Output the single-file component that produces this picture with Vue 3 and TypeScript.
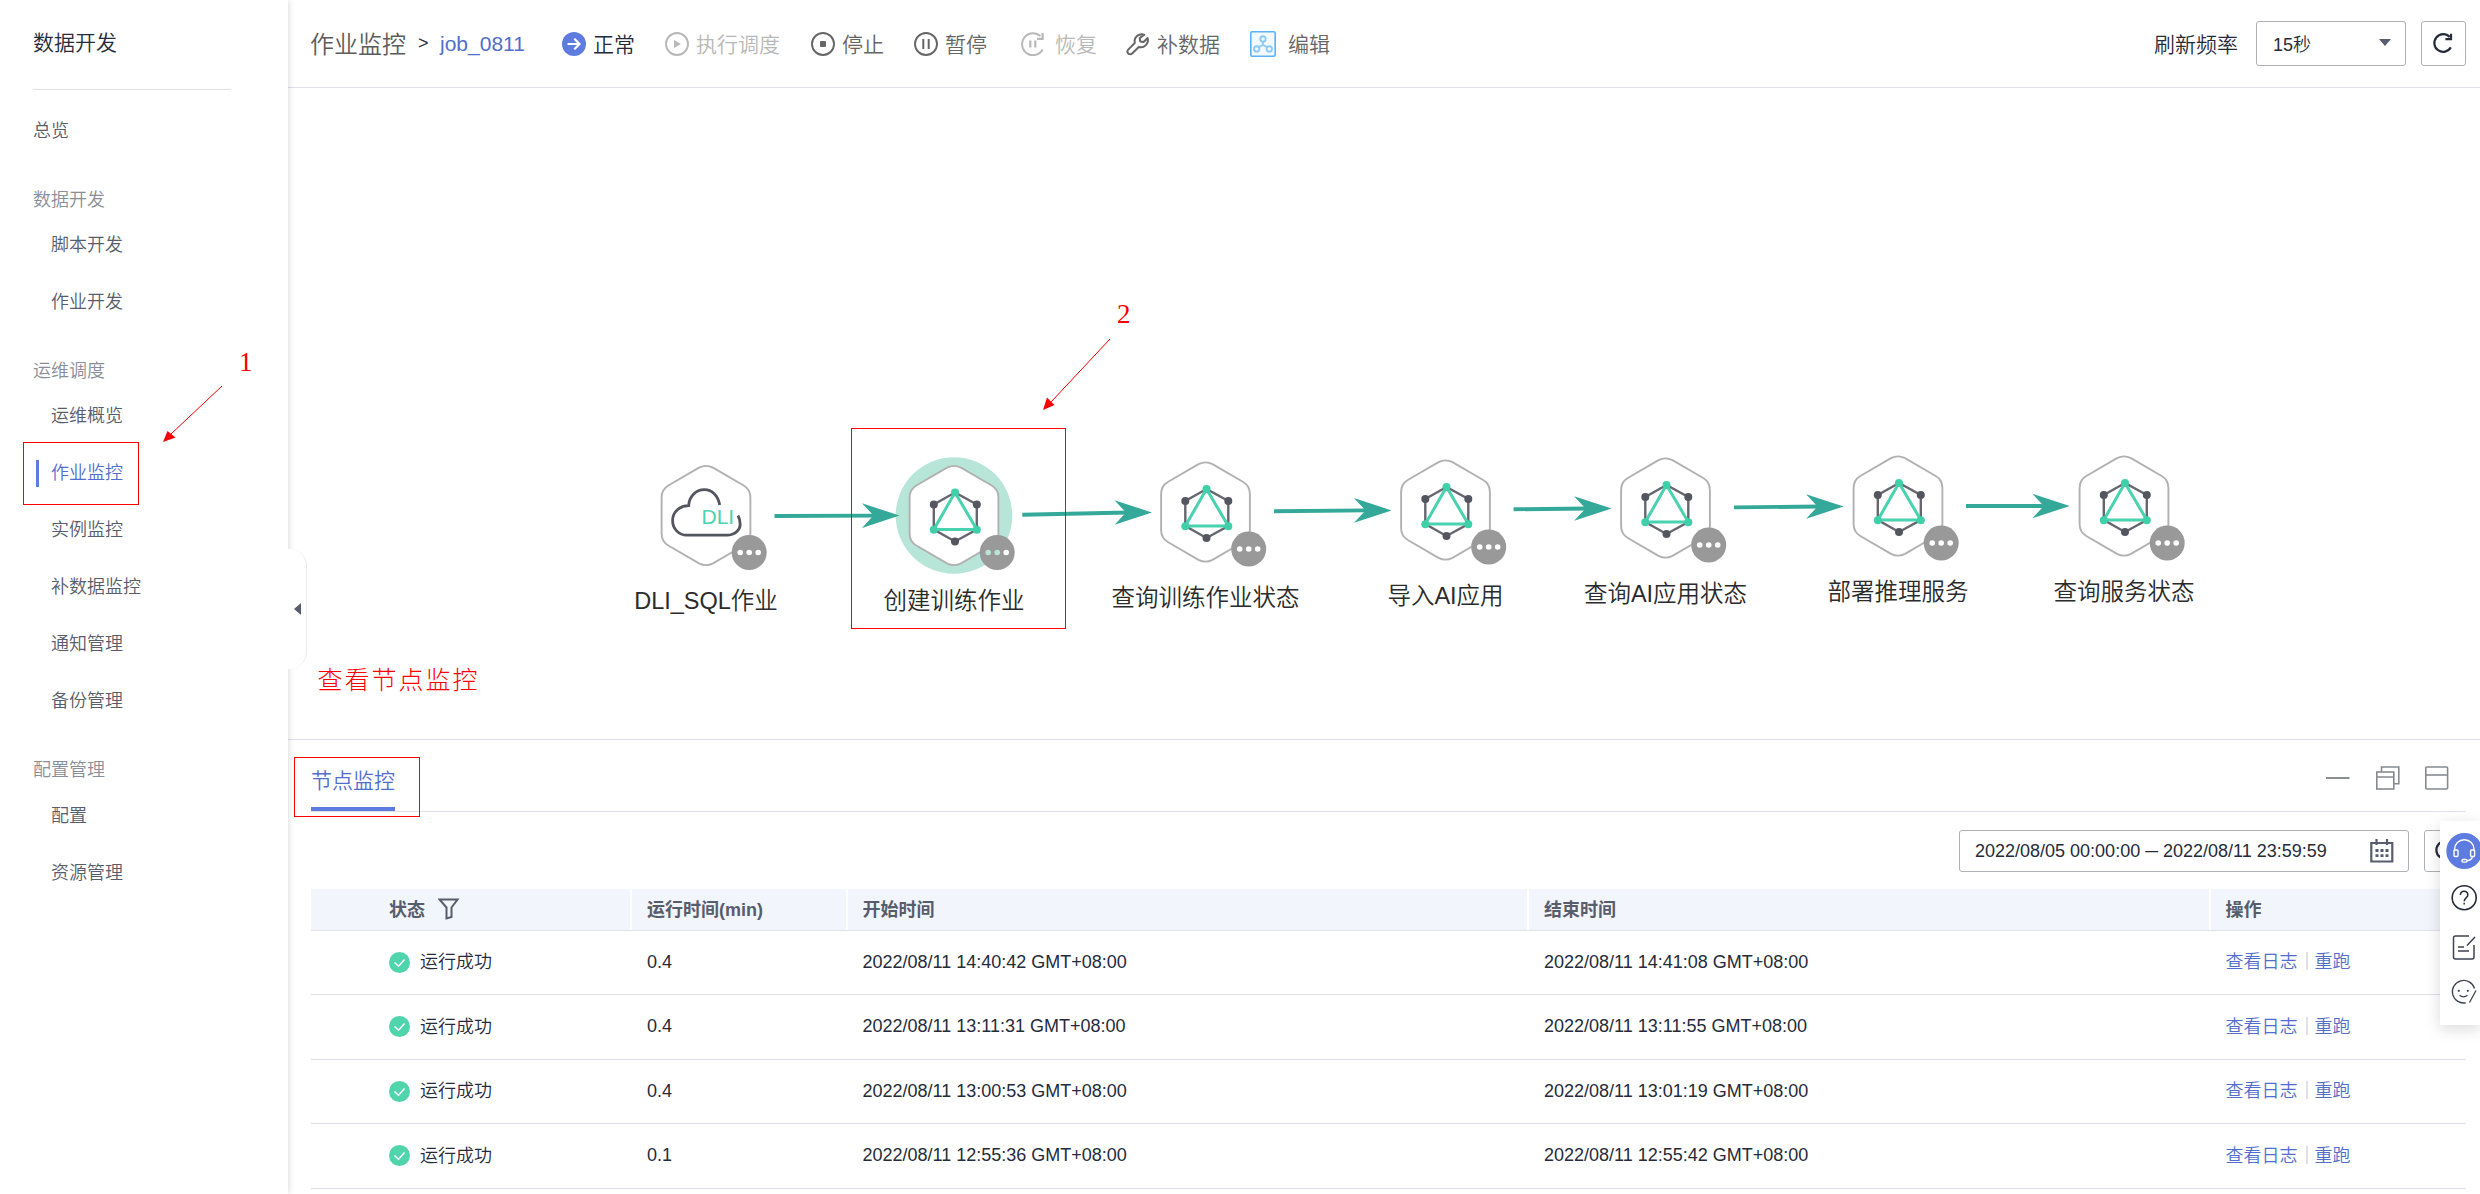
<script setup lang="ts">
interface NavItem { label: string; active?: boolean }
interface NavGroup { title: string; items: NavItem[] }
interface FlowNode { x: number; y: number; label: string; kind: 'dli' | 'train'; selected?: boolean }
interface Link { x1: number; y1: number; x2: number; y2: number }
interface Run { minutes: string; start: string; end: string }

const groups: NavGroup[] = [
  { title: '数据开发', items: [{ label: '脚本开发' }, { label: '作业开发' }] },
  {
    title: '运维调度',
    items: [
      { label: '运维概览' },
      { label: '作业监控', active: true },
      { label: '实例监控' },
      { label: '补数据监控' },
      { label: '通知管理' },
      { label: '备份管理' },
    ],
  },
  { title: '配置管理', items: [{ label: '配置' }, { label: '资源管理' }] },
]

const nodes: FlowNode[] = [
  { x: 706, y: 515.5, label: 'DLI_SQL作业', kind: 'dli' },
  { x: 954, y: 515.5, label: '创建训练作业', kind: 'train', selected: true },
  { x: 1205.5, y: 512, label: '查询训练作业状态', kind: 'train' },
  { x: 1445.5, y: 510, label: '导入AI应用', kind: 'train' },
  { x: 1665.5, y: 508, label: '查询AI应用状态', kind: 'train' },
  { x: 1898, y: 506, label: '部署推理服务', kind: 'train' },
  { x: 2124, y: 506, label: '查询服务状态', kind: 'train' },
]

const links: Link[] = [
  { x1: 774.5, y1: 516, x2: 899.5, y2: 515.6 },
  { x1: 1022.3, y1: 514.8, x2: 1152, y2: 512.5 },
  { x1: 1274, y1: 511.3, x2: 1391.5, y2: 510.4 },
  { x1: 1513.6, y1: 509.3, x2: 1611.6, y2: 508.5 },
  { x1: 1734, y1: 507.4, x2: 1843.6, y2: 506.5 },
  { x1: 1966, y1: 506, x2: 2069.8, y2: 506 },
]

const runs: Run[] = [
  { minutes: '0.4', start: '2022/08/11 14:40:42 GMT+08:00', end: '2022/08/11 14:41:08 GMT+08:00' },
  { minutes: '0.4', start: '2022/08/11 13:11:31 GMT+08:00', end: '2022/08/11 13:11:55 GMT+08:00' },
  { minutes: '0.4', start: '2022/08/11 13:00:53 GMT+08:00', end: '2022/08/11 13:01:19 GMT+08:00' },
  { minutes: '0.1', start: '2022/08/11 12:55:36 GMT+08:00', end: '2022/08/11 12:55:42 GMT+08:00' },
]

const hexPath =
  'M-7,-47.8 Q0,-51.4 7,-47.8 L37.7,-30 Q44.4,-26 44.4,-18 L44.4,18 Q44.4,26 37.7,30 L7,47.8 Q0,51.4 -7,47.8 L-37.7,30 Q-44.4,26 -44.4,18 L-44.4,-18 Q-44.4,-26 -37.7,-30 Z'
</script>

<template>
  <div class="page">
    <aside class="sidebar">
      <div class="side-title">数据开发</div>
      <nav>
        <div class="nav-top">总览</div>
        <section v-for="g in groups" :key="g.title">
          <div class="nav-group">{{ g.title }}</div>
          <div v-for="i in g.items" :key="i.label" class="nav-item" :class="{ active: i.active }">{{ i.label }}</div>
        </section>
      </nav>
      <div class="collapse"><span class="collapse-arrow"></span></div>
    </aside>

    <main class="main">
      <header class="toolbar">
        <span class="crumb">作业监控</span>
        <span class="sep">&gt;</span>
        <span class="job">job_0811</span>
        <span class="tool status">
          <svg width="24" height="24" viewBox="0 0 24 24"><circle cx="12" cy="12" r="12" fill="#5e7ce0" /><path d="M5.5 12H17M12.3 6.8 17.5 12l-5.2 5.2" fill="none" stroke="#fff" stroke-width="2.2" /></svg>
          <span>正常</span>
        </span>
        <span class="tool off">
          <svg width="24" height="24" viewBox="0 0 24 24"><circle cx="12" cy="12" r="11" fill="none" stroke="currentColor" stroke-width="1.9" /><path d="M9 8v8l7-4z" fill="currentColor" /></svg>
          <span>执行调度</span>
        </span>
        <span class="tool">
          <svg width="24" height="24" viewBox="0 0 24 24"><circle cx="12" cy="12" r="11" fill="none" stroke="currentColor" stroke-width="1.9" /><rect x="9" y="9" width="6" height="6" rx="1" fill="currentColor" /></svg>
          <span>停止</span>
        </span>
        <span class="tool pause">
          <svg width="24" height="24" viewBox="0 0 24 24"><circle cx="12" cy="12" r="11" fill="none" stroke="currentColor" stroke-width="1.9" /><path d="M9.3 7v10M14.7 7v10" stroke="currentColor" stroke-width="2" /></svg>
          <span>暂停</span>
        </span>
        <span class="tool off resume">
          <svg width="24" height="24" viewBox="0 0 24 24"><path d="M21.7 17.5A11 11 0 1 1 19.5 4" fill="none" stroke="currentColor" stroke-width="2" /><path d="M21.600 1v5.800h-5.500" fill="none" stroke="currentColor" stroke-width="2.200" /><path d="M9.300 8.500v7M14.300 8.500v7" stroke="currentColor" stroke-width="2.200" /></svg>
          <span>恢复</span>
        </span>
        <span class="tool">
          <svg width="24" height="24" viewBox="0 0 24 24"><path d="M18.200 2.600A7.200 7.200 0 0 0 8.800 11L2.200 17.600a2.700 2.700 0 0 0 0 3.900 2.700 2.700 0 0 0 3.900 0L12.800 15A7.200 7.200 0 0 0 21.600 6l-4 4-3.400-.6-.5-3.300z" fill="none" stroke="currentColor" stroke-width="2" stroke-linejoin="round" /></svg>
          <span>补数据</span>
        </span>
        <span class="tool edit">
          <svg width="26" height="26" viewBox="0 0 26 26" fill="none"><rect x=".8" y=".8" width="24.400" height="24.400" rx="1.500" fill="#f3faff" stroke="#5ab2f8" stroke-width="1.600" /><g stroke="#8ecbfb" stroke-width="1.900"><circle cx="13" cy="8" r="2.700" /><circle cx="6.700" cy="18" r="2.700" /><circle cx="19.300" cy="18" r="2.700" /><path d="M13 11v3.200M8.600 16.200 13 14l4.400 2.200" /></g></svg>
          <span>编辑</span>
        </span>
        <span class="rate-label">刷新频率</span>
        <div class="select"><span>15秒</span><span class="caret"></span></div>
        <button class="btn-refresh" aria-label="refresh">
          <svg width="22" height="22" viewBox="0 0 22 22"><path d="M18.800 15.400A8.800 8.800 0 1 1 17.600 5" fill="none" stroke="#252b3a" stroke-width="2.200" /><path d="M19 1.800v5.400h-5.600" fill="none" stroke="#252b3a" stroke-width="2.200" /></svg>
        </button>
      </header>

      <div class="canvas">
        <svg width="2192" height="651" viewBox="288 88 2192 651">
          <g v-for="n in nodes" :key="n.label" :transform="`translate(${n.x},${n.y})`">
            <circle v-if="n.selected" r="58.3" fill="#b7e6d8" />
            <path :d="hexPath" fill="#fff" stroke="#b1b1b1" stroke-width="1.9" />
            <g v-if="n.kind === 'dli'">
              <path d="M13.7,-10.5 C12,-20 6,-25.8 -1.7,-25.8 C-10,-25.8 -17,-19 -17.3,-9.8 C-26,-9.8 -33.4,-4 -33.4,5 C-33.4,13 -27.5,19.7 -19,19.7 L21,19.7 C29,19.7 34.2,14 34.2,9 C34.2,5 33.6,3 32,0" fill="none" stroke="#53555f" stroke-width="2.8" />
              <text x="-4.5" y="8.4" class="dli">DLI</text>
            </g>
            <g v-else transform="translate(1,0)">
              <path d="M0,-23 L21.8,-11 L21.8,14 L0,26 L-21.2,14 L-21.2,-11 Z" fill="none" stroke="#65666f" stroke-width="2.4" />
              <circle cx="21.8" cy="-11" r="4" fill="#53555f" />
              <circle cx="-21.2" cy="-11" r="4" fill="#53555f" />
              <circle cx="0" cy="26" r="4" fill="#53555f" />
              <path d="M0,-23 L21.8,14 L-21.2,14 Z" fill="#fff" stroke="#49d2af" stroke-width="3" />
              <circle cx="0" cy="-23" r="4" fill="#3fcfa9" />
              <circle cx="21.8" cy="14.3" r="4" fill="#3fcfa9" />
              <circle cx="-21.2" cy="14.3" r="4" fill="#3fcfa9" />
            </g>
            <g transform="translate(43.2,37)">
              <circle r="17.5" fill="#999" />
              <circle cx="-9" r="2.8" :fill="n.selected ? '#b7e6d8' : '#fff'" />
              <circle cx="0" r="2.8" :fill="n.selected ? '#b7e6d8' : '#fff'" />
              <circle cx="9" r="2.8" fill="#fff" />
            </g>
            <text x="0" y="93.5" text-anchor="middle" class="node-label">{{ n.label }}</text>
          </g>
          <g v-for="l in links" :key="l.x1" fill="#34a899">
            <line :x1="l.x1" :y1="l.y1" :x2="l.x2 - 24" :y2="l.y2" stroke="#34a899" stroke-width="3.9" />
            <path :transform="`translate(${l.x2},${l.y2})`" d="M0,0 L-37.5,12.3 L-26,0 L-37.5,-12.3 Z" />
          </g>
        </svg>
      </div>

      <section class="panel">
        <div class="tabs">
          <span class="tab">节点监控</span>
          <div class="win-icons">
            <svg width="24" height="24" viewBox="0 0 24 24"><path d="M0 12h23.500" stroke="#868a8f" stroke-width="1.900" /></svg>
            <svg width="24" height="24" viewBox="0 0 24 24" fill="none" stroke="#868a8f" stroke-width="1.600"><rect x=".8" y="6" width="17" height="17" /><path d="M.8 11h17M5.500 6V1h17.300v16.800h-5" /></svg>
            <svg width="24" height="24" viewBox="0 0 24 24" fill="none" stroke="#868a8f" stroke-width="1.600"><rect x=".8" y="1" width="21.800" height="22" rx="1" /><path d="M.8 9h21.800" /></svg>
          </div>
        </div>
        <div class="filters">
          <div class="daterange">
            <span>2022/08/05 00:00:00 ─ 2022/08/11 23:59:59</span>
            <svg width="24" height="24" viewBox="0 0 24 24" fill="none" stroke="#575d6c"><path d="M1.300 4h21v18.500h-21z" stroke-width="2.200" /><path d="M6.500 0v6M17 0v6" stroke-width="2.200" /><path d="M5.500 11.500h13M5.500 16.700h13" stroke-width="2.800" stroke-dasharray="3 2" /></svg>
          </div>
          <button class="btn-refresh small" aria-label="refresh">
            <svg width="22" height="22" viewBox="0 0 22 22"><path d="M18.800 15.400A8.800 8.800 0 1 1 17.600 5" fill="none" stroke="#252b3a" stroke-width="2.200" /></svg>
          </button>
        </div>
        <div class="table">
          <div class="row head">
            <div class="cell c-status"><span>状态</span>
              <svg width="22" height="22" viewBox="0 0 22 22"><path d="M1.500 1.500h18l-6 8v9.500l-5 1.500v-11z" fill="none" stroke="#575d6c" stroke-width="2" /></svg>
            </div>
            <div class="cell"><span>运行时间(min)</span></div>
            <div class="cell"><span>开始时间</span></div>
            <div class="cell"><span>结束时间</span></div>
            <div class="cell last"><span>操作</span></div>
          </div>
          <div v-for="r in runs" :key="r.start" class="row">
            <div class="cell c-status">
              <svg class="ok" width="21" height="21" viewBox="0 0 21 21"><circle cx="10.500" cy="10.500" r="10.500" fill="#50d4ab" /><path d="M5.500 10.500l4 3.700 6-6.600" fill="none" stroke="#fff" stroke-width="1.500" /></svg>
              <span class="cn">运行成功</span>
            </div>
            <div class="cell">{{ r.minutes }}</div>
            <div class="cell">{{ r.start }}</div>
            <div class="cell">{{ r.end }}</div>
            <div class="cell ops"><a class="cn">查看日志</a><i></i><a class="cn">重跑</a></div>
          </div>
        </div>
      </section>
    </main>

    <div class="float-bar">
      <svg width="40" height="204" viewBox="2440 821 40 204" fill="none" stroke="#3c4354" stroke-width="1.5">
        <circle cx="2464.3" cy="851" r="18" fill="#5e7ce0" stroke="none" />
        <g stroke="#fff" stroke-width="1.4">
          <path d="M2454.5 850.5v-1a9.8 9.8 0 0 1 19.6 0v1" />
          <rect x="2454" y="850" width="4" height="6.5" rx="1" />
          <rect x="2470.6" y="850" width="4" height="6.5" rx="1" />
          <path d="M2472.5 857c-1 2.500-3 3.500-5.500 3.800" />
          <rect x="2462" y="859.500" width="5" height="2.600" rx="1" />
        </g>
        <circle cx="2464.200" cy="897.700" r="12" stroke="#252b3a" stroke-width="1.600" />
        <path d="M2460.400 895c0-5 7.400-5 7.400 0 0 2.900-3.600 2.900-3.600 6.200M2464.200 902.800v1.800" stroke="#252b3a" />
        <path d="M2469 936h-13.500q-2 0-2 2v19q0 2 2 2h16.500q2 0 2-2v-12M2475 937l-8 8.500M2458 947h6M2458 951h11" />
        <path d="M2465.800 1002.800A11.300 11.300 0 1 1 2474.500 988.500M2476 990.500l-6.500 12M2459.500 995.300q4 3.200 8 0" stroke-width="1.300" />
        <circle cx="2458.800" cy="990.800" r="1.100" fill="#3c4354" stroke="none" />
        <circle cx="2467.800" cy="990.800" r="1.100" fill="#3c4354" stroke="none" />
      </svg>
    </div>

    <svg class="notes" width="2480" height="1194" viewBox="0 0 2480 1194" fill="none" stroke="#f00">
      <g shape-rendering="crispEdges">
        <rect x="23.500" y="442.500" width="115" height="62" />
        <rect x="851.500" y="428.500" width="214" height="200" />
        <rect x="294.500" y="757.500" width="125" height="59" />
      </g>
      <path d="M222 386 171 434M1110 339 1051 402" />
      <path d="M163 442l4.500-11 8 6.500zM1043 410l4-12.500 7.500 7.500z" fill="#f00" stroke="none" />
      <text x="239" y="371" class="num">1</text>
      <text x="1117" y="323" class="num">2</text>
      <text x="317.500" y="688.500" class="note">查看节点监控</text>
    </svg>
  </div>
</template>

<style>
body {
  margin: 0;
  overflow: hidden;
  background: #fff;
}
</style>

<style scoped>
.page {
  position: relative;
  display: flex;
  width: 2480px;
  height: 1194px;
  overflow: hidden;
  background: #fff;
  color: #252b3a;
  font-family: "Liberation Sans", "Noto Sans CJK SC", sans-serif;
  font-size: 18px;
  font-weight: 350;
}
svg {
  display: block;
  flex: none;
}
.sidebar {
  position: relative;
  z-index: 2;
  flex: none;
  box-sizing: border-box;
  width: 288px;
  height: 1194px;
  padding-left: 33px;
  background: #fff;
  box-shadow: 1px 0 6px rgba(0, 0, 0, 0.14);
}
.side-title {
  width: 198px;
  height: 89px;
  line-height: 86px;
  font-size: 21px;
  border-bottom: 1px solid #dfe1e6;
}
.nav-top {
  height: 57px;
  margin-top: 13px;
  line-height: 57px;
  color: #575d6c;
}
.nav-group {
  height: 25.200px;
  padding-top: 28px;
  padding-bottom: 4px;
  line-height: 25px;
  color: #8a8e99;
}
.nav-item {
  position: relative;
  height: 57px;
  padding-left: 18px;
  line-height: 57px;
  color: #575d6c;
}
.nav-item.active {
  color: #526ecc;
}
.nav-item.active::before {
  content: "";
  position: absolute;
  left: 3px;
  top: 15px;
  width: 3px;
  height: 27px;
  background: #5e7ce0;
}
.collapse {
  position: absolute;
  left: 288px;
  top: 549px;
  display: flex;
  align-items: center;
  box-sizing: border-box;
  width: 19px;
  height: 120px;
  padding-left: 6px;
  background: #fff;
  border-right: 1px solid #e9ebf3;
  border-radius: 0 17px 17px 0;
}
.collapse-arrow {
  border: 6px solid transparent;
  border-left-width: 0;
  border-right: 7px solid #575d6c;
}
.main {
  flex: 1;
  display: flex;
  flex-direction: column;
  min-width: 0;
}
.toolbar {
  display: flex;
  align-items: center;
  box-sizing: border-box;
  height: 88px;
  padding: 0 14px 0 22px;
  border-bottom: 1px solid #dfe1e6;
  font-size: 21px;
  white-space: nowrap;
}
.crumb {
  padding-bottom: 2px;
  font-size: 24px;
  color: #5c5c5c;
}
.sep {
  width: 22px;
  margin-left: 12px;
  font-size: 18px;
}
.job {
  width: 84px;
  margin-right: 38px;
  color: #526ecc;
}
.tool {
  display: flex;
  align-items: center;
  gap: 7px;
  margin-right: 30px;
  color: #666;
}
.tool > span,
.rate-label,
.head span {
  padding-bottom: 2px;
}
.tool.status {
  color: #252b3a;
}
.tool.off {
  color: #b8b8b8;
  margin-right: 31px;
}
.tool.pause {
  margin-right: 34px;
}
.tool.resume {
  gap: 10px;
  margin-right: 29px;
}
.tool.edit {
  gap: 12px;
}
.rate-label {
  margin-left: auto;
}
.select {
  display: flex;
  align-items: center;
  justify-content: space-between;
  box-sizing: border-box;
  width: 150px;
  height: 45px;
  margin: 0 15px 0 18px;
  padding: 0 14px 2px 16px;
  border: 1px solid #adb0b8;
  border-radius: 3px;
  font-size: 18px;
}
.caret {
  border: 6px solid transparent;
  border-bottom-width: 0;
  border-top: 7px solid #575d6c;
  margin-bottom: 1px;
}
.btn-refresh {
  display: flex;
  align-items: center;
  justify-content: center;
  box-sizing: border-box;
  width: 45px;
  height: 45px;
  padding: 0 1px 2px 0;
  border: 1px solid #adb0b8;
  border-radius: 3px;
  background: #fff;
}
.btn-refresh.small {
  width: 42px;
  height: 42px;
}
.canvas {
  height: 651px;
  border-bottom: 1px solid #dfe1e6;
}
.dli {
  font-size: 21px;
  font-weight: 400;
  fill: #4bd2b3;
}
.node-label {
  font-size: 23.500px;
  fill: #2b2b2b;
}
.panel {
  flex: 1;
  padding: 0 14px 0 23px;
}
.tabs {
  display: flex;
  justify-content: space-between;
  box-sizing: border-box;
  height: 72px;
  border-bottom: 1px solid #dfe1e6;
}
.tab {
  box-sizing: border-box;
  height: 71px;
  line-height: 82px;
  font-size: 21px;
  color: #526ecc;
  border-bottom: 4px solid #5e7ce0;
}
.win-icons {
  display: flex;
  gap: 25.500px;
  padding: 25.500px 17px 0 0;
}
.filters {
  display: flex;
  justify-content: flex-end;
  gap: 15px;
  padding: 18px 0 17px;
}
.daterange {
  display: flex;
  align-items: center;
  justify-content: space-between;
  box-sizing: border-box;
  width: 450px;
  height: 42px;
  padding: 0 14px 0 15px;
  border: 1px solid #adb0b8;
  border-radius: 3px;
  white-space: pre;
}
.row {
  display: grid;
  grid-template-columns: 321px 215.500px 681.500px 681.500px 1fr;
  box-sizing: border-box;
  height: 64.500px;
  border-bottom: 1px solid #dfe1e6;
}
.head {
  height: 41.500px;
  background: #f2f5fc;
  color: #575d6c;
  font-weight: 700;
}
.cell {
  display: flex;
  align-items: center;
  padding-left: 15px;
  white-space: nowrap;
}
.head .cell {
  border-right: 2px solid #fff;
}
.head .cell.last {
  border-right: 0;
}
.cell.c-status {
  padding-left: 78px;
  gap: 13px;
}
.row:not(.head) .c-status {
  gap: 10px;
}
.cn {
  padding-bottom: 4px;
}
.ops {
  color: #526ecc;
}
.ops i {
  width: 2px;
  height: 18px;
  margin: 0 7px 2px 8px;
  background: #dfe1e6;
}
.float-bar {
  position: absolute;
  z-index: 3;
  right: 0;
  top: 821px;
  width: 40px;
  height: 204px;
  background: #fff;
  box-shadow: 0 4px 16px rgba(0, 0, 0, 0.15);
}
.notes {
  position: absolute;
  z-index: 4;
  left: 0;
  top: 0;
  pointer-events: none;
}
.num {
  font-family: "Liberation Serif", serif;
  font-size: 27px;
  fill: #f00;
  stroke: none;
}
.note {
  font-family: "Noto Sans CJK SC", serif;
  font-size: 25px;
  font-weight: 300;
  letter-spacing: 2px;
  fill: #f00;
  stroke: none;
}
</style>
